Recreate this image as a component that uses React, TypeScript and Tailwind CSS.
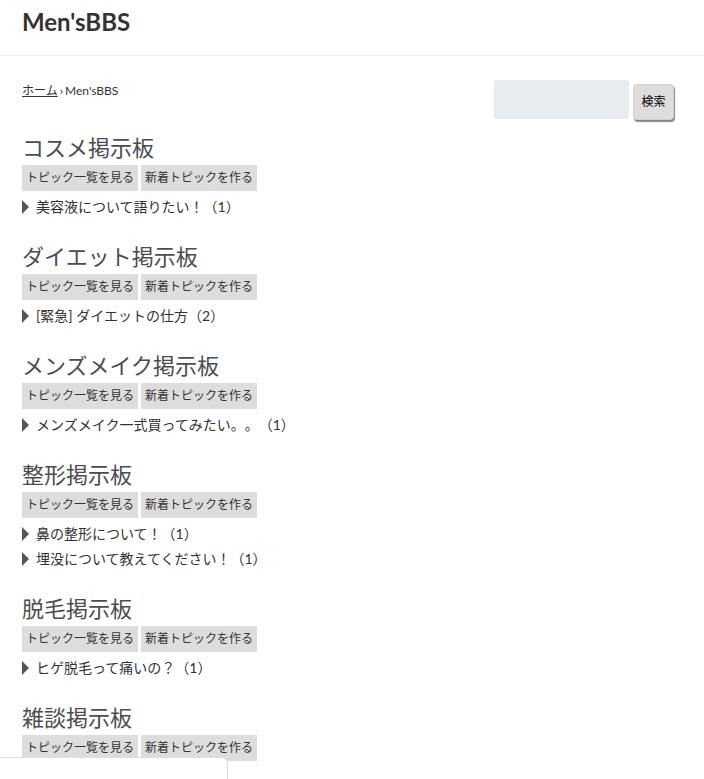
const boards = [
  { name: "コスメ掲示板", topics: ["美容液について語りたい！（1）"] },
  { name: "ダイエット掲示板", topics: ["[緊急] ダイエットの仕方（2）"] },
  { name: "メンズメイク掲示板", topics: ["メンズメイク一式買ってみたい。。（1）"] },
  { name: "整形掲示板", topics: ["鼻の整形について！（1）", "埋没について教えてください！（1）"] },
  { name: "脱毛掲示板", topics: ["ヒゲ脱毛って痛いの？（1）"] },
  { name: "雑談掲示板", topics: [] as string[] },
];

function Board({ name, topics }: { name: string; topics: string[] }) {
  return (
    <section className="mb-[24px]">
      <h2 className="text-[22px] leading-[28px] text-[#4a4d52] font-normal">{name}</h2>
      <div className="mt-[3px] flex gap-[3px]">
        <a href="#" className="h-[26px] px-[4px] flex items-center bg-[#dddddd] text-[12px] text-[#333]">
          トピック一覧を見る
        </a>
        <a href="#" className="h-[26px] px-[4px] flex items-center bg-[#dddddd] text-[12px] text-[#333]">
          新着トピックを作る
        </a>
      </div>
      {topics.length > 0 && (
        <ul className="mt-[3px]">
          {topics.map((t) => (
            <li key={t} className="h-[25px] flex items-center text-[14px] text-[#333]">
              {/* triangle marker */}
              <span className="w-0 h-0 border-y-[7px] border-y-transparent border-l-[7px] border-l-[#555] mr-[7px]" />
              <a href="#">{t}</a>
            </li>
          ))}
        </ul>
      )}
    </section>
  );
}

export default function App() {
  return (
    <div
      className="min-h-screen bg-white text-[#333] [text-spacing-trim:space-all]"
      style={{ fontFamily: "Lato, 'Noto Sans CJK JP', sans-serif" }}
    >
      <header className="h-[56px] border-b border-[#f0f0f0] px-[22px] flex items-center">
        <h1 className="text-[24px] font-bold text-[#333] leading-none -mt-[12px]">Men'sBBS</h1>
      </header>

      <main className="pl-[22px] pr-[30px] pt-[24px]">
        <div className="flex items-start justify-between">
          <nav className="text-[12px] text-[#333] mt-[2px]">
            <a href="#" className="underline">ホーム</a>
            <span className="mx-[2px]">›</span>
            <span>Men'sBBS</span>
          </nav>
          <form className="flex items-start gap-[4px]" onSubmit={(e) => e.preventDefault()}>
            <input className="w-[135px] h-[39px] bg-[#e9ecef] rounded-[3px] outline-none" />
            <button className="mt-[4px] w-[41px] h-[36px] bg-[#dddddd] rounded-[4px] border border-[#cfcfcf] shadow-[1px_2px_1px_#888] text-[12px] text-black">
              検索
            </button>
          </form>
        </div>

        <div className="mt-[14px]">
          {boards.map((b) => (
            <Board key={b.name} {...b} />
          ))}
        </div>
      </main>

      {/* floating box at the bottom left */}
      <div className="fixed bottom-0 left-[-1px] w-[229px] h-[22px] bg-white border border-b-0 border-[#dddddd] rounded-tr-[6px]" />
    </div>
  );
}
